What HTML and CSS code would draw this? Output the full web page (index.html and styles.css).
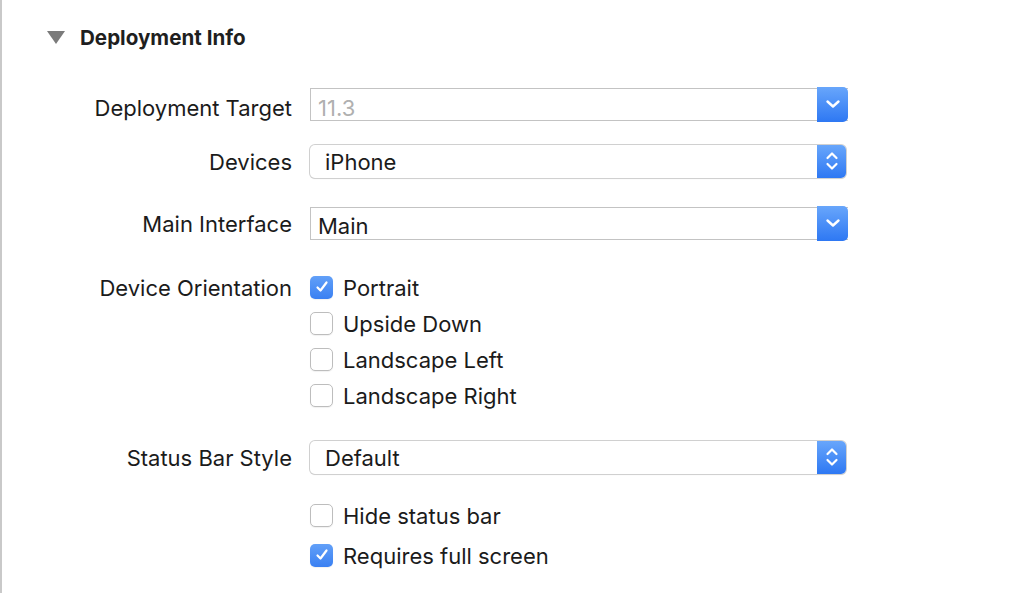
FILE: index.html
```html
<!DOCTYPE html>
<html lang="en">
<head>
    <meta charset="UTF-8">
    <title>Deployment Info</title>
    <link rel="stylesheet" href="styles.css">
</head>
<body>
    <div class="pane">
        <!-- Section header -->
        <div class="section-head">
            <span class="disclosure"></span>
            <h2>Deployment Info</h2>
        </div>

        <div class="row r-target">
            <label class="label low">Deployment Target</label>
            <div class="combo">
                <span class="combo-text muted low">11.3</span>
                <span class="combo-btn">
                    <svg width="16" height="10" viewBox="0 0 16 10"><path d="M2.5 2.5 L8 7.5 L13.5 2.5" fill="none" stroke="#fff" stroke-width="2.4" stroke-linecap="round" stroke-linejoin="round"/></svg>
                </span>
            </div>
        </div>

        <div class="row r-devices">
            <label class="label">Devices</label>
            <div class="popup">
                <span class="popup-text">iPhone</span>
                <span class="popup-btn">
                    <svg width="14" height="22" viewBox="0 0 14 22"><path d="M2.5 8 L7 3.5 L11.5 8 M2.5 14 L7 18.5 L11.5 14" fill="none" stroke="#fff" stroke-width="2.2" stroke-linecap="round" stroke-linejoin="round"/></svg>
                </span>
            </div>
        </div>

        <div class="row r-main">
            <label class="label">Main Interface</label>
            <div class="combo">
                <span class="combo-text lower">Main</span>
                <span class="combo-btn">
                    <svg width="16" height="10" viewBox="0 0 16 10"><path d="M2.5 2.5 L8 7.5 L13.5 2.5" fill="none" stroke="#fff" stroke-width="2.4" stroke-linecap="round" stroke-linejoin="round"/></svg>
                </span>
            </div>
        </div>

        <div class="row r-orient">
            <label class="label">Device Orientation</label>
            <div class="check">
                <span class="box on">
                    <svg width="16" height="16" viewBox="0 0 16 16"><path d="M3.5 8.5 L6.5 11.5 L12.5 3.5" fill="none" stroke="#fff" stroke-width="2.2" stroke-linecap="round" stroke-linejoin="round"/></svg>
                </span>
                <span>Portrait</span>
            </div>
        </div>
        <div class="row">
            <span class="label"></span>
            <div class="check"><span class="box"></span><span>Upside Down</span></div>
        </div>
        <div class="row">
            <span class="label"></span>
            <div class="check"><span class="box"></span><span>Landscape Left</span></div>
        </div>
        <div class="row">
            <span class="label"></span>
            <div class="check"><span class="box"></span><span>Landscape Right</span></div>
        </div>

        <div class="row r-status">
            <label class="label">Status Bar Style</label>
            <div class="popup">
                <span class="popup-text">Default</span>
                <span class="popup-btn">
                    <svg width="14" height="22" viewBox="0 0 14 22"><path d="M2.5 8 L7 3.5 L11.5 8 M2.5 14 L7 18.5 L11.5 14" fill="none" stroke="#fff" stroke-width="2.2" stroke-linecap="round" stroke-linejoin="round"/></svg>
                </span>
            </div>
        </div>

        <div class="row r-hide">
            <span class="label"></span>
            <div class="check"><span class="box"></span><span>Hide status bar</span></div>
        </div>
        <div class="row r-full">
            <span class="label"></span>
            <div class="check">
                <span class="box on">
                    <svg width="16" height="16" viewBox="0 0 16 16"><path d="M3.5 8.5 L6.5 11.5 L12.5 3.5" fill="none" stroke="#fff" stroke-width="2.2" stroke-linecap="round" stroke-linejoin="round"/></svg>
                </span>
                <span>Requires full screen</span>
            </div>
        </div>
    </div>
</body>
</html>
```

FILE: styles.css
```css
html, body {
    margin: 0;
    padding: 0;
    background: #fff;
}

body {
    font-family: Inter, 'Noto Sans', sans-serif;
    color: #1b1b1b;
    height: 593px;
    overflow: hidden;
}

.pane {
    border-left: 2px solid #c9c9c9;
    height: 593px;
    box-sizing: border-box;
}

.section-head {
    display: flex;
    align-items: center;
    height: 36px;
    padding-top: 19px;
    padding-left: 45px;
}

.disclosure {
    width: 0;
    height: 0;
    border-left: 9px solid transparent;
    border-right: 9px solid transparent;
    border-top: 13px solid #7b7b7b;
    margin-right: 15px;
}

.section-head h2 {
    margin: 0;
    font-size: 20.6px;
    font-weight: 700;
    color: #1f1f1f;
}

.row {
    display: flex;
    align-items: center;
    height: 36px;
    gap: 18px;
    font-size: 22px;
}

.row > span,
.row > .label,
.check > span:last-child {
    padding-top: 2px;
}

.label {
    width: 290px;
    text-align: right;
    flex-shrink: 0;
}

.row > .label.low,
.low {
    padding-top: 7px;
}

.lower {
    padding-top: 5px;
}

.r-target { margin-top: 31px; }
.r-devices { margin-top: 21px; }
.r-main { margin-top: 26px; }
.r-orient { margin-top: 28px; }
.r-status { margin-top: 26px; }
.r-hide { margin-top: 22px; }
.r-full { margin-top: 4px; }

/* combo box: text field + blue drop button */
.combo {
    display: flex;
    align-items: center;
    width: 538px;
    height: 33px;
    box-sizing: border-box;
    border: 1px solid #c3c3c3;
    border-right: none;
}

.combo-text {
    padding-left: 7px;
    flex: 1;
}

.muted {
    color: #b0b0b0;
}

.combo-btn {
    width: 31px;
    height: 35px;
    border-radius: 0 5px 5px 0;
    background: linear-gradient(#68a6fb, #2e78f3);
    display: flex;
    align-items: center;
    justify-content: center;
}

/* pop up button */
.popup {
    display: flex;
    align-items: center;
    width: 536px;
    height: 33px;
    box-sizing: border-box;
    border-radius: 5px;
    background: #fff;
    box-shadow: 0 0 0 1px #d0d0d0, 0 1px 1px rgba(0, 0, 0, 0.15);
}

.popup-text {
    padding-left: 15px;
    padding-top: 2px;
    flex: 1;
}

.popup-btn {
    width: 29px;
    height: 33px;
    border-radius: 0 5px 5px 0;
    background: linear-gradient(#68a6fb, #2e78f3);
    display: flex;
    align-items: center;
    justify-content: center;
}

/* checkboxes */
.check {
    display: flex;
    align-items: center;
    gap: 10px;
}

.box {
    width: 23px;
    height: 23px;
    box-sizing: border-box;
    border: 1px solid #bdbdbd;
    border-radius: 5px;
    background: #fff;
    box-shadow: 0 1px 1px rgba(0, 0, 0, 0.06);
    display: flex;
    align-items: center;
    justify-content: center;
}

.box.on {
    border: none;
    background: linear-gradient(#62a0f8, #3a80f2);
}
```
